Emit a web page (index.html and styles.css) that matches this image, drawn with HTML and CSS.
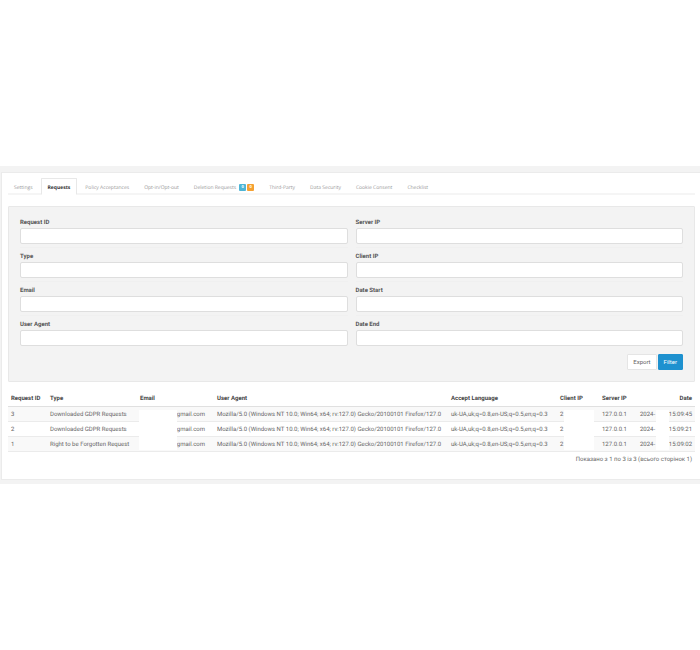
FILE: index.html
```
<!DOCTYPE html>
<html lang="uk">
<head>
<meta charset="utf-8">
<title>GDPR Requests</title>
<link rel="stylesheet" href="styles.css">
</head>
<body>
<main class="page">
  <section class="panel">
    <nav class="tabs">
      <a class="tab" href="#settings">Settings</a>
      <a class="tab active" href="#requests">Requests</a>
      <a class="tab" href="#policy">Policy Acceptances</a>
      <a class="tab" href="#opt">Opt-in/Opt-out</a>
      <a class="tab" href="#deletion">Deletion Requests <span class="badges"><span class="badge info">0</span><span class="badge warn">0</span></span></a>
      <a class="tab" href="#third">Third-Party</a>
      <a class="tab" href="#security">Data Security</a>
      <a class="tab" href="#cookie">Cookie Consent</a>
      <a class="tab" href="#checklist">Checklist</a>
    </nav>
    <form class="well">
      <div class="columns">
        <div class="column">
          <div class="field"><label for="rid">Request ID</label><input id="rid" type="text"></div>
          <div class="field"><label for="type">Type</label><input id="type" type="text"></div>
          <div class="field"><label for="email">Email</label><input id="email" type="text"></div>
          <div class="field"><label for="agent">User Agent</label><input id="agent" type="text"></div>
        </div>
        <div class="column">
          <div class="field"><label for="sip">Server IP</label><input id="sip" type="text"></div>
          <div class="field"><label for="cip">Client IP</label><input id="cip" type="text"></div>
          <div class="field"><label for="start">Date Start</label><input id="start" type="text"></div>
          <div class="field"><label for="end">Date End</label><input id="end" type="text"></div>
        </div>
      </div>
      <div class="actions">
        <button class="btn" type="button">Export</button>
        <button class="btn primary" type="button">Filter</button>
      </div>
    </form>
    <table class="list">
      <colgroup><col class="c-id"><col class="c-type"><col class="c-email"><col class="c-agent"><col class="c-lang"><col class="c-client"><col class="c-server"><col class="c-date"></colgroup>
      <thead>
        <tr><th>Request ID</th><th>Type</th><th>Email</th><th>User Agent</th><th>Accept Language</th><th>Client IP</th><th>Server IP</th><th class="end">Date</th></tr>
      </thead>
      <tbody>
        <tr><td>3</td><td>Downloaded GDPR Requests</td><td class="mail">gmail.com<span class="mask mask-mail"></span></td><td>Mozilla/5.0 (Windows NT 10.0; Win64; x64; rv:127.0) Gecko/20100101 Firefox/127.0</td><td>uk-UA,uk;q=0.8,en-US;q=0.5,en;q=0.3</td><td>2<span class="mask mask-ip"></span></td><td>127.0.0.1</td><td><div class="stamp"><span>2024-</span><span>15:09:45</span></div><span class="mask mask-date"></span></td></tr>
        <tr><td>2</td><td>Downloaded GDPR Requests</td><td class="mail">gmail.com</td><td>Mozilla/5.0 (Windows NT 10.0; Win64; x64; rv:127.0) Gecko/20100101 Firefox/127.0</td><td>uk-UA,uk;q=0.8,en-US;q=0.5,en;q=0.3</td><td>2</td><td>127.0.0.1</td><td><div class="stamp"><span>2024-</span><span>15:09:21</span></div></td></tr>
        <tr><td>1</td><td>Right to be Forgotten Request</td><td class="mail">gmail.com</td><td>Mozilla/5.0 (Windows NT 10.0; Win64; x64; rv:127.0) Gecko/20100101 Firefox/127.0</td><td>uk-UA,uk;q=0.8,en-US;q=0.5,en;q=0.3</td><td>2</td><td>127.0.0.1</td><td><div class="stamp"><span>2024-</span><span>15:09:02</span></div></td></tr>
      </tbody>
    </table>
    <p class="summary">Показано з 1 по 3 із 3 (всього сторінок 1)</p>
  </section>
</main>
</body>
</html>
```
FILE: styles.css
```
* { box-sizing: border-box; }
body {
  margin: 0;
  padding: 166px 0;
  background: #fff;
  color: #666;
  font: 6px/8px Roboto, "Open Sans", sans-serif;
  text-rendering: geometricPrecision;
}
.page { background: #f3f3f3; padding: 6px 0 4px 1px; }
.panel {
  background: #fff;
  border: 1px solid #ebebeb;
  border-right: 0;
  padding: 5px 5px 15px 6px;
}
.tabs {
  display: flex;
  height: 17px;
  border-bottom: 2px solid #f5f5f5;
  font-family: "Open Sans", sans-serif;
  font-size: 5px;
}
.tab {
  display: flex;
  align-items: center;
  gap: 3px;
  height: 17px;
  padding: 2px 6px 0;
  margin-right: 1px;
  border: 1px solid transparent;
  color: #999;
  text-decoration: none;
  white-space: nowrap;
}
.tab:first-child { padding-left: 5px; }
.tab.active {
  background: #fff;
  border-color: #e8e8e8;
  border-bottom-color: #fff;
  border-radius: 1px 1px 0 0;
  color: #333;
  font-weight: 700;
}
.badges { display: flex; gap: 1px; }
.badge {
  width: 7px;
  height: 7px;
  border-radius: 1px;
  color: #fff;
  font-size: 4px;
  line-height: 7px;
  font-weight: 700;
  text-align: center;
}
.info { background: #4eb5d6; }
.warn { background: #f5a133; }
.well {
  margin-top: 11px;
  padding: 11px;
  background: #f3f3f3;
  border: 1px solid #e8e8e8;
  border-radius: 1px;
}
.columns { display: grid; grid-template-columns: 1fr 1fr; gap: 8px; }
.field { height: 34px; }
.field::after {
  content: "";
  display: block;
  height: 1px;
  margin-top: 3px;
  background: #f0f0f0;
}
.field:last-child::after { display: none; }
.field label {
  display: block;
  height: 10px;
  line-height: 10px;
  color: #555;
  font-weight: 700;
}
.field input {
  display: block;
  width: 100%;
  height: 16px;
  padding: 0 4px;
  border: 1px solid #dedede;
  border-radius: 2px;
  background: #fff;
  font: inherit;
}
.actions { display: flex; justify-content: flex-end; gap: 1px; }
.btn {
  height: 16px;
  padding: 0 5px;
  border: 1px solid #e5e5e5;
  border-radius: 1px;
  background: #fff;
  color: #666;
  font: inherit;
}
.primary { background: #1e91cf; border-color: #1e91cf; color: #fff; }
.list {
  width: 100%;
  margin-top: 9px;
  border-collapse: collapse;
  table-layout: fixed;
}
.c-id { width: 39px; }
.c-type { width: 90px; }
.c-email { width: 77px; }
.c-agent { width: 234px; }
.c-lang { width: 109px; }
.c-client { width: 42px; }
.c-server { width: 38px; }
.list th, .list td {
  position: relative;
  height: 15px;
  padding: 2px 3px 0;
  text-align: left;
  white-space: nowrap;
}
.list th { border-bottom: 1px solid #e0e0e0; color: #444; }
.list td { border-bottom: 1px solid #ebebeb; }
.list tbody tr:nth-child(odd) { background: #f9f9f9; }
.list .end { text-align: right; }
.list .mail { text-align: right; padding-right: 9px; }
.stamp { display: flex; justify-content: space-between; }
.mask { position: absolute; z-index: 1; top: 3px; height: 40px; background: #fff; }
.mask-mail { left: 2px; width: 38px; }
.mask-ip { left: 7px; width: 30px; }
.mask-date { right: 26px; width: 13px; }
.summary { margin: 4px 3px 0; text-align: right; }
```
